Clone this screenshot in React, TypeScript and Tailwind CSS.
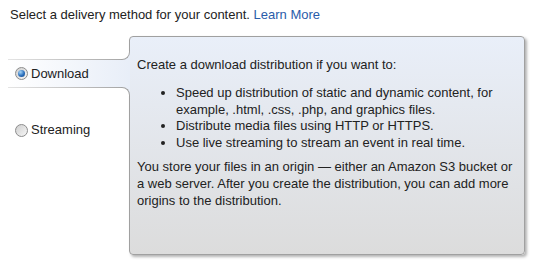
import React from 'react';

const Radio: React.FC<{ checked?: boolean }> = ({ checked }) => (
  <span className="inline-flex h-[13px] w-[13px] shrink-0 items-center justify-center rounded-full border border-[#8c8c8c] bg-[linear-gradient(135deg,#cfcfcf,#f7f7f7)]">
    {checked && (
      <span className="h-[7px] w-[7px] rounded-full bg-[radial-gradient(circle_at_35%_30%,#a6d6f7,#2b6fbd_55%,#17467f)]" />
    )}
  </span>
);

const App: React.FC = () => {
  return (
    <div className="h-[266px] w-[540px] overflow-hidden bg-white font-['Liberation_Sans',Arial,sans-serif] text-[13px] text-[#222]">
      <p className="pl-[10px] pt-[6px] leading-[17px]">
        Select a delivery method for your content. <a className="text-[#2a5caa]">Learn More</a>
      </p>

      <div className="mt-[13px] flex">
        {/* tabs */}
        <div className="w-[129px] shrink-0 pt-[23px]">
          <div className="relative z-10 ml-[8px] mr-[-1px] flex h-[29px] flex-col bg-[linear-gradient(to_right,#ffffff,#e8eef8)]">
            <div className="h-px bg-[linear-gradient(to_right,#e4e4e4,#a3a3a3)]" />
            <div className="flex flex-1 items-center gap-[3px] pl-[7px]">
              <Radio checked />
              <span className="leading-[16px]">Download</span>
            </div>
            <div className="h-px bg-[linear-gradient(to_right,#e4e4e4,#a3a3a3)]" />

            <div className="absolute right-0 top-[-8px] z-20 h-[9px] w-[9px] bg-[#e8eef8]">
              <div className="h-full w-full rounded-br-[8px] border-b border-r border-[#a3a3a3] bg-white" />
            </div>
            <div className="absolute bottom-[-8px] right-0 z-20 h-[9px] w-[9px] bg-[#e8eef8]">
              <div className="h-full w-full rounded-tr-[8px] border-r border-t border-[#a3a3a3] bg-white" />
            </div>
          </div>

          <div className="mt-[34px] flex items-center gap-[3px] pl-[15px]">
            <Radio />
            <span className="leading-[16px]">Streaming</span>
          </div>
        </div>

        {/* panel */}
        <div className="h-[219px] w-[396px] shrink-0 rounded-[4px] border border-[#a0a0a0] bg-[linear-gradient(to_bottom,#e9eff9,#dcdcdc)] pl-[7px] pr-[6px] pt-[20px] leading-[16px] shadow-[2px_2px_3px_rgba(0,0,0,0.3)]">
          <p>Create a download distribution if you want to:</p>
          <ul className="mt-[12px] list-disc pl-[39px] leading-[16.5px]">
            <li>Speed up distribution of static and dynamic content, for example, .html, .css, .php, and graphics files.</li>
            <li>Distribute media files using HTTP or HTTPS.</li>
            <li>Use live streaming to stream an event in real time.</li>
          </ul>
          <p className="mt-[7px] leading-[17px]">
            You store your files in an origin — either an Amazon S3 bucket or a web server. After you create the distribution, you can add more origins to the distribution.
          </p>
        </div>
      </div>
    </div>
  );
};

export default App;
